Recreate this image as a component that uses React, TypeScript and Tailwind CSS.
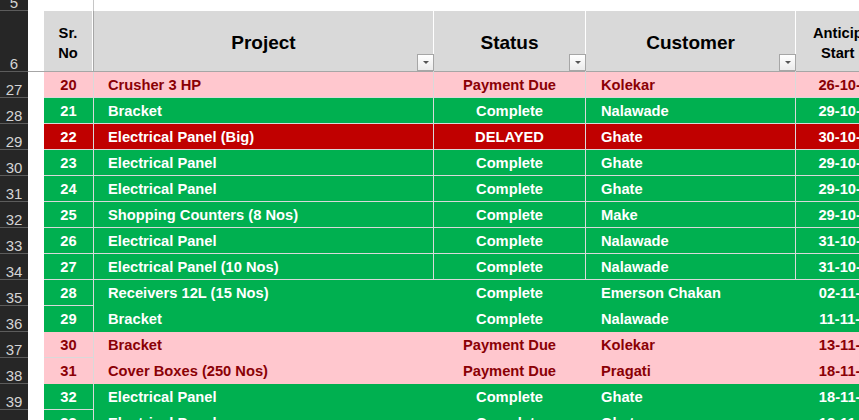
import React from 'react'

type Kind = 'pink' | 'green' | 'red'

const ROWS: { sr: number; project: string; status: string; customer: string; date: string; kind: Kind }[] = [
  { sr: 20, project: 'Crusher 3 HP', status: 'Payment Due', customer: 'Kolekar', date: '26-10-2019', kind: 'pink' },
  { sr: 21, project: 'Bracket', status: 'Complete', customer: 'Nalawade', date: '29-10-2019', kind: 'green' },
  { sr: 22, project: 'Electrical Panel (Big)', status: 'DELAYED', customer: 'Ghate', date: '30-10-2019', kind: 'red' },
  { sr: 23, project: 'Electrical Panel', status: 'Complete', customer: 'Ghate', date: '29-10-2019', kind: 'green' },
  { sr: 24, project: 'Electrical Panel', status: 'Complete', customer: 'Ghate', date: '29-10-2019', kind: 'green' },
  { sr: 25, project: 'Shopping Counters (8 Nos)', status: 'Complete', customer: 'Make', date: '29-10-2019', kind: 'green' },
  { sr: 26, project: 'Electrical Panel', status: 'Complete', customer: 'Nalawade', date: '31-10-2019', kind: 'green' },
  { sr: 27, project: 'Electrical Panel (10 Nos)', status: 'Complete', customer: 'Nalawade', date: '31-10-2019', kind: 'green' },
  { sr: 28, project: 'Receivers 12L (15 Nos)', status: 'Complete', customer: 'Emerson Chakan', date: '02-11-2019', kind: 'green' },
  { sr: 29, project: 'Bracket', status: 'Complete', customer: 'Nalawade', date: '11-11-2019', kind: 'green' },
  { sr: 30, project: 'Bracket', status: 'Payment Due', customer: 'Kolekar', date: '13-11-2019', kind: 'pink' },
  { sr: 31, project: 'Cover Boxes (250 Nos)', status: 'Payment Due', customer: 'Pragati', date: '18-11-2019', kind: 'pink' },
  { sr: 32, project: 'Electrical Panel', status: 'Complete', customer: 'Ghate', date: '18-11-2019', kind: 'green' },
  { sr: 33, project: 'Electrical Panel', status: 'Complete', customer: 'Ghate', date: '18-11-2019', kind: 'green' },
]

const KIND_CLASS: Record<Kind, string> = {
  pink: 'bg-[#ffc7ce] text-[#8a0005]',
  green: 'bg-[#00b050] text-white',
  red: 'bg-[#c00000] text-white',
}

function Gutter({ n, h }: { n: number; h: string }) {
  return (
    <div
      className={`w-[28px] shrink-0 ${h} bg-[#262626] border-b border-[#5c5c5c] flex items-end justify-center text-[15px] leading-[15px] text-[#d4d4d4] font-normal overflow-hidden`}
    >
      {n}
    </div>
  )
}

function Filter() {
  return (
    <div className="absolute right-[-1px] bottom-0 w-[17px] h-[17px] border border-[#a6a6a6] bg-linear-to-b from-white to-[#ebebeb] flex items-center justify-center">
      <div className="w-0 h-0 border-l-[3px] border-r-[3px] border-t-[3px] border-l-transparent border-r-transparent border-t-[#555]" />
    </div>
  )
}

export default function App() {
  return (
    <div className="w-[859px] h-[420px] overflow-hidden bg-white font-['Liberation_Sans',Arial,sans-serif] font-bold">
      {/* row 5 */}
      <div className="flex h-[11px]">
        <Gutter n={5} h="h-[11px]" />
        <div className="w-[66px] h-[11px] border-r border-[#c6c6c6]" />
      </div>

      {/* row 6 - header */}
      <div className="flex h-[61px]">
        <Gutter n={6} h="h-[61px]" />
        <div className="w-[16px] shrink-0 border-b border-[#a6a6a6]" />
        <div className="w-[50px] shrink-0 flex border-r border-b border-[#a6a6a6]">
          <div className="flex-1 bg-[#d9d9d9] border-r border-white flex flex-col items-center justify-center pt-[3px] text-[14.7px] leading-[20px] text-black">
            <span>Sr.</span>
            <span>No</span>
          </div>
        </div>
        <div className="relative w-[340px] shrink-0 bg-[#d9d9d9] border-r border-r-white border-b border-b-[#a6a6a6] flex items-center justify-center pt-[4px] text-[19px] text-black">
          Project
          <Filter />
        </div>
        <div className="relative w-[152px] shrink-0 bg-[#d9d9d9] border-r border-r-white border-b border-b-[#a6a6a6] flex items-center justify-center pt-[4px] text-[19px] text-black">
          Status
          <Filter />
        </div>
        <div className="relative w-[210px] shrink-0 bg-[#d9d9d9] border-r border-r-white border-b border-b-[#a6a6a6] flex items-center justify-center pt-[4px] text-[19px] text-black">
          Customer
          <Filter />
        </div>
        <div className="w-[120px] shrink-0 bg-[#d9d9d9] border-b border-[#a6a6a6] flex flex-col items-start pl-[17px] justify-center pt-[3px] text-[14.7px] leading-[20px] text-black whitespace-nowrap">
          <span>Anticipated</span>
          <span className="pl-[8px]">Start Date</span>
        </div>
      </div>

      {/* data rows */}
      {ROWS.map((r, i) => {
        const boxed = i < 8
        const next = ROWS[i + 1]
        const srLine = boxed || (next && next.kind === r.kind)
        const line = boxed ? 'border-[#d9d9d9]' : 'border-transparent'
        return (
          <div key={r.sr} className="flex h-[26px] text-[14.7px] leading-none">
            <Gutter n={27 + i} h="h-[26px]" />
            <div className="w-[16px] shrink-0" />
            <div
              className={`w-[50px] shrink-0 flex items-center justify-center pt-[2px] border-r border-r-[#d9d9d9] border-b ${srLine ? 'border-b-[#d9d9d9]' : 'border-b-transparent'} ${KIND_CLASS[r.kind]}`}
            >
              {r.sr}
            </div>
            <div className={`w-[340px] shrink-0 flex items-center pt-[2px] pl-[14px] border-r border-b ${line} ${KIND_CLASS[r.kind]} whitespace-nowrap`}>
              {r.project}
            </div>
            <div className={`w-[152px] shrink-0 flex items-center justify-center pt-[2px] border-r border-b ${line} ${KIND_CLASS[r.kind]} whitespace-nowrap`}>
              {r.status}
            </div>
            <div className={`w-[210px] shrink-0 flex items-center pt-[2px] pl-[15px] border-r border-b ${line} ${KIND_CLASS[r.kind]} whitespace-nowrap`}>
              {r.customer}
            </div>
            <div className={`w-[120px] shrink-0 flex items-center justify-center pt-[2px] border-b ${line} ${KIND_CLASS[r.kind]} whitespace-nowrap`}>
              {r.date}
            </div>
          </div>
        )
      })}
    </div>
  )
}
